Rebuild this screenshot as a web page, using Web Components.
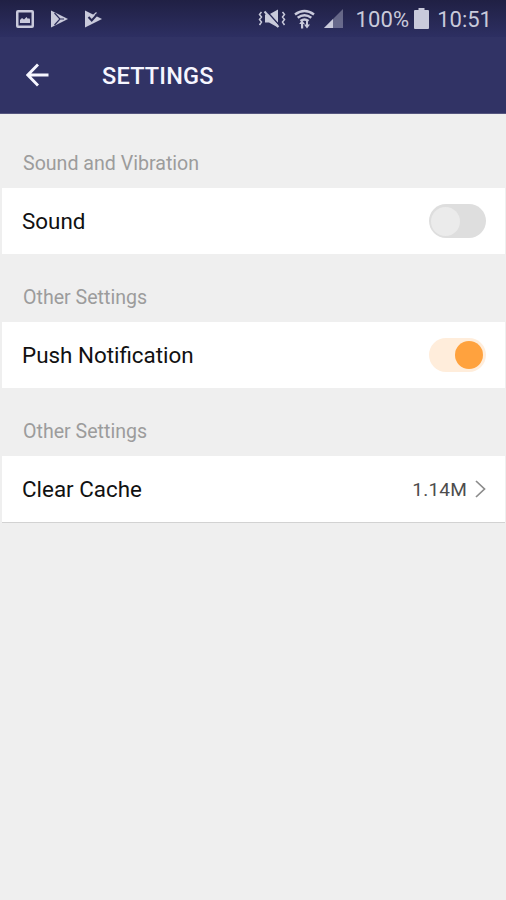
<!DOCTYPE html>
<html lang="en">
<head>
<meta charset="utf-8">
<title>Settings</title>
<style>
html,body{margin:0;height:100%;background:#efefef}
body{font-family:Roboto,"Liberation Sans",sans-serif}
</style>
</head>
<body>
<settings-screen></settings-screen>
<script>
const define = (name, html) => customElements.define(name, class extends HTMLElement {
  constructor() {
    super();
    this.attachShadow({mode: 'open'}).innerHTML = html;
  }
});

define('status-bar', `
<style>
:host{display:flex;align-items:center;box-sizing:border-box;height:37px;padding:0 14px 0 16px;color:#c9cadb;background:linear-gradient(#202044,#2d2f62)}
svg{display:block;flex:none;fill:currentColor}
.play{margin-left:16px}.check{margin-left:16px}
.mute{margin-left:auto}.wifi{margin-left:8px}.signal{margin-left:9px}
span{font-size:22px;line-height:36px;padding-top:2px;white-space:nowrap}
.pct{margin-left:13px;letter-spacing:.1px}.batt{margin:0 8px 0 5px}
</style>
<svg width="18" height="18" viewBox="0 0 18 18"><path fill-rule="evenodd" d="M2 0h14q2 0 2 2v14q0 2-2 2H2q-2 0-2-2V2q0-2 2-2zM2.500 2.500v13h13v-13z"/><path d="M4 13V10l2-2 2 1.500L10.500 7 12 9l1-1 1 1.500V13z"/></svg>
<svg class="play" width="18" height="18" viewBox="0 0 18 18"><path d="M1 .5l17 8.500L1 17.500z"/><path d="M4.500 3l5.500 6-5.500 6M10 9h4" fill="none" stroke="#2b2c5b" stroke-width="1.200"/></svg>
<svg class="check" width="18" height="18" viewBox="0 0 18 18"><path d="M1 .5l17 8.500L1 17.500z"/><path d="M4.500 7l3.200 3.500L14.500 3" fill="none" stroke="#272853" stroke-width="2"/><path d="M8 6.500L12.500 2.500" stroke="currentColor" stroke-width="1.200"/></svg>
<svg class="mute" width="28" height="20" viewBox="0 0 28 20"><path d="M7 5.500h4l9-5v18l-9-5H7z"/><path d="M8 1.500L22 17" stroke="#292a58" stroke-width="1.600"/><path d="M6.500 2.500L20.500 18" stroke="currentColor" stroke-width="2"/><path d="M3.500 3l-2 2.500 2 2.500-2 2.500 2 2.500-2 3M24.500 3l2 2.500-2 2.500 2 2.500-2 2.500 2 3" fill="none" stroke="currentColor" stroke-width="1.500"/></svg>
<svg class="wifi" width="21" height="20" viewBox="0 0 21 20"><g fill="none" stroke="currentColor" stroke-width="2.500"><path d="M1 5.500q9.500-7 19 0"/><path d="M3.700 8.800q6.800-5 13.600 0"/><path d="M6.500 12q4-3 8 0"/></g><path d="M8 11l2.800 4H9.200v4.500H7V15H5.200zM12 12h2v3.500h2l-3 4-3-4h2z"/></svg>
<svg class="signal" width="19" height="19" viewBox="0 0 19 19"><path d="M19 0v19H0z" opacity=".4"/><path d="M9 10v9H0z"/></svg>
<span class="pct">100%</span>
<svg class="batt" width="15" height="21" viewBox="0 0 15 21"><path d="M4.500 0h6v2H14q1 0 1 1v17q0 1-1 1H1q-1 0-1-1V3q0-1 1-1h3.500z"/></svg>
<span>10:51</span>`);

define('app-bar', `
<style>
:host{display:flex;align-items:center;box-sizing:border-box;height:77px;padding-left:26px;background:#313365;border-bottom:1px solid #55567f;color:#f6f6ff}
svg{display:block;margin-right:53px}
h1{margin:0;font-size:23.500px;line-height:72px;padding-top:2px;font-weight:500;letter-spacing:.2px}
</style>
<svg width="23" height="24" viewBox="0 0 23 24" fill="none" stroke="currentColor" stroke-width="2.800"><path d="M22.500 12H2M12 1.500L1.800 12 12 22.500"/></svg>
<h1><slot></slot></h1>`);

define('settings-section', `
<style>
:host{display:block;padding-top:20px}
:host(:first-of-type){padding-top:26px}
h2{margin:0;padding:1px 0 0 23px;height:48px;box-sizing:border-box;font-weight:400;font-size:19.600px;line-height:46px;color:#9c9c9c}
</style>
<h2><slot name="heading"></slot></h2><slot></slot>`);

define('settings-row', `
<style>
:host{display:flex;align-items:center;justify-content:space-between;box-sizing:border-box;height:66px;margin:0 1px 0 2px;padding:0 19px 0 20px;background:#fff;color:#111;font-size:22.400px}
.end{display:flex;align-items:center}
</style>
<span><slot></slot></span><div class="end"><slot name="end"></slot></div>`);

define('toggle-switch', `
<style>
:host{display:flex;align-items:center;box-sizing:border-box;width:57px;height:34px;padding:0 2px;border-radius:17px;background:#dedede}
i{width:29px;height:29px;border-radius:50%;background:#ebebeb}
:host([on]){background:#ffeddb;justify-content:flex-end;padding-right:3px}
:host([on]) i{width:28px;height:28px;background:#ffa23e}
</style><i></i>`);

define('value-link', `
<style>
:host{display:flex;align-items:center;font-size:19px;letter-spacing:.2px;color:#4d4d4d}
span{padding-top:1px}
svg{margin-left:8px;display:block}
</style>
<span><slot></slot></span><svg width="11" height="18" viewBox="0 0 11 18" fill="none" stroke="#8b8b8b" stroke-width="1.700"><path d="M1 1l8.500 8L1 17"/></svg>`);

define('settings-screen', `
<style>
:host{display:block;min-height:900px;background:#efefef}
.last{height:67px;border-bottom:1px solid #d2d2d2}
</style>
<status-bar></status-bar>
<app-bar>SETTINGS</app-bar>
<settings-section><span slot="heading">Sound and Vibration</span>
<settings-row>Sound<toggle-switch slot="end"></toggle-switch></settings-row></settings-section>
<settings-section><span slot="heading">Other Settings</span>
<settings-row>Push Notification<toggle-switch slot="end" on></toggle-switch></settings-row></settings-section>
<settings-section><span slot="heading">Other Settings</span>
<settings-row class="last">Clear Cache<value-link slot="end">1.14M</value-link></settings-row></settings-section>`);
</script>
</body>
</html>
